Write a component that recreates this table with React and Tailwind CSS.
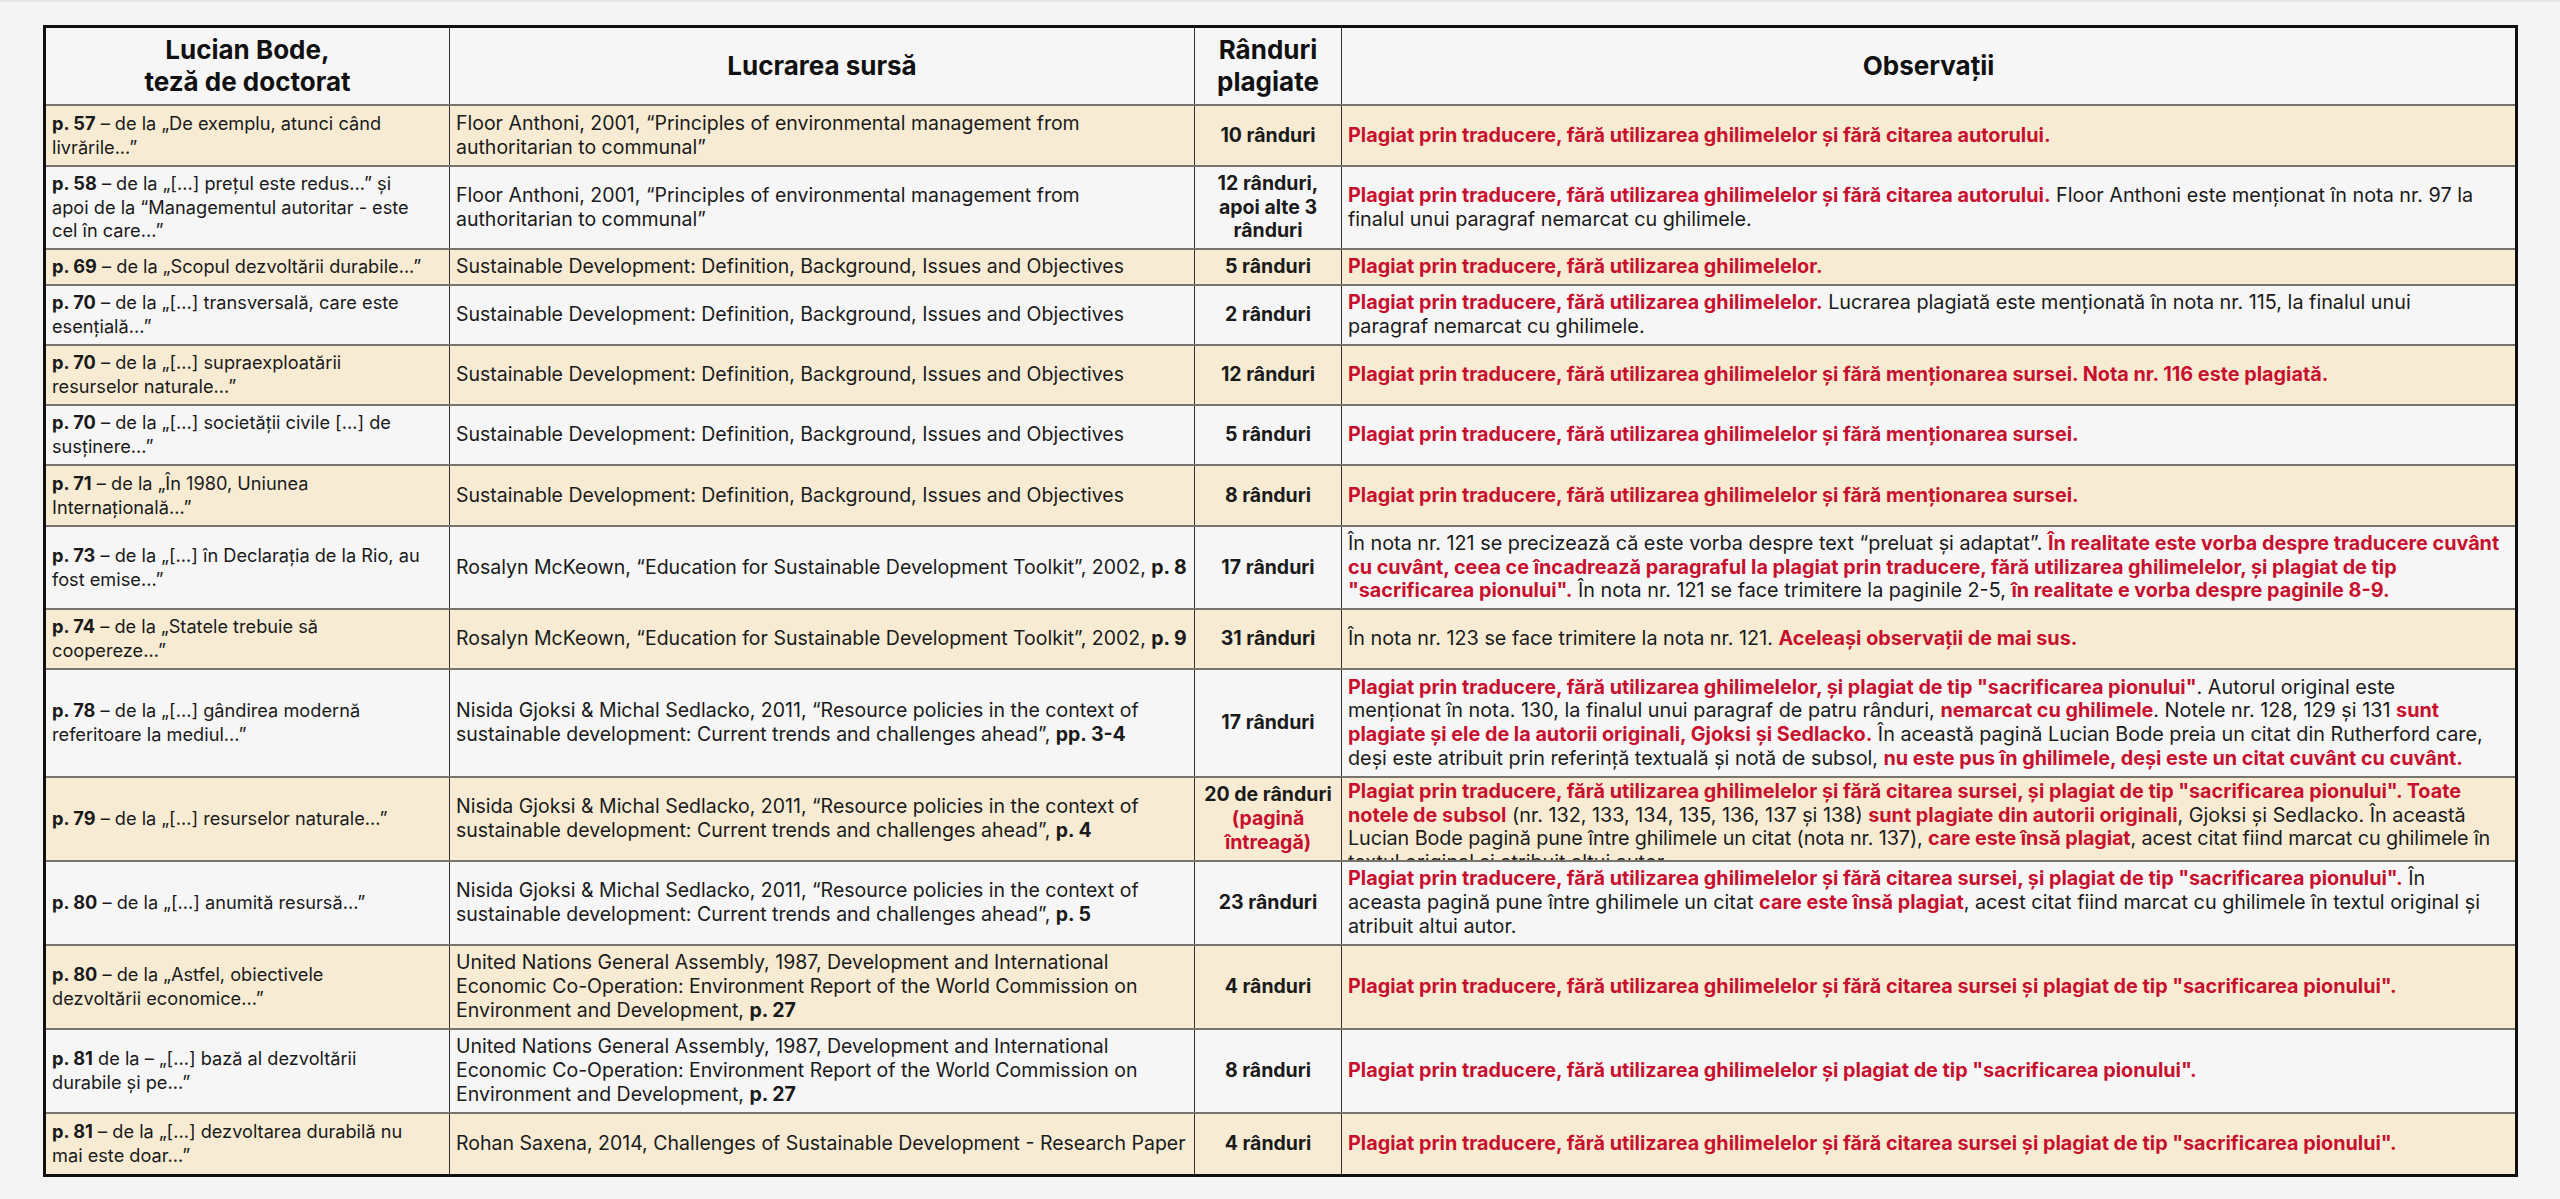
import React from 'react';

const R = ({ children }) => <span className="font-bold text-[#c8102e]">{children}</span>;
const B = ({ children }) => <span className="font-bold">{children}</span>;

const SD = 'Sustainable Development: Definition, Background, Issues and Objectives';
const FLOOR = 'Floor Anthoni, 2001, “Principles of environmental management from authoritarian to communal”';
const NISIDA =
  'Nisida Gjoksi & Michal Sedlacko, 2011, “Resource policies in the context of sustainable development: Current trends and challenges ahead”, ';
const UN =
  'United Nations General Assembly, 1987, Development and International Economic Co-Operation: Environment Report of the World Commission on Environment and Development, ';

// first column: page + quoted fragment, broken where the original breaks
const rows = [
  {
    h: 'h-[61px]',
    pg: 'p. 57',
    page: ['– de la „De exemplu, atunci când', 'livrările...”'],
    src: FLOOR,
    lines: '10 rânduri',
    obs: <R>Plagiat prin traducere, fără utilizarea ghilimelelor și fără citarea autorului.</R>,
  },
  {
    h: 'h-[83px]',
    pg: 'p. 58',
    page: ['– de la „[...] prețul este redus...” și', 'apoi de la “Managementul autoritar - este', 'cel în care...”'],
    src: FLOOR,
    lines: '12 rânduri, apoi alte 3 rânduri',
    obs: (
      <>
        <R>Plagiat prin traducere, fără utilizarea ghilimelelor și fără citarea autorului.</R> Floor Anthoni este menționat în nota nr. 97 la
        <br />
        finalul unui paragraf nemarcat cu ghilimele.
      </>
    ),
  },
  {
    h: 'h-[36px]',
    pg: 'p. 69',
    page: ['– de la „Scopul dezvoltării durabile...”'],
    src: SD,
    lines: '5 rânduri',
    obs: <R>Plagiat prin traducere, fără utilizarea ghilimelelor.</R>,
  },
  {
    h: 'h-[60px]',
    pg: 'p. 70',
    page: ['– de la „[...] transversală, care este', 'esențială...”'],
    src: SD,
    lines: '2 rânduri',
    obs: (
      <>
        <R>Plagiat prin traducere, fără utilizarea ghilimelelor.</R> Lucrarea plagiată este menționată în nota nr. 115, la finalul unui
        <br />
        paragraf nemarcat cu ghilimele.
      </>
    ),
  },
  {
    h: 'h-[60px]',
    pg: 'p. 70',
    page: ['– de la „[...] supraexploatării', 'resurselor naturale...”'],
    src: SD,
    lines: '12 rânduri',
    obs: <R>Plagiat prin traducere, fără utilizarea ghilimelelor și fără menționarea sursei. Nota nr. 116 este plagiată.</R>,
  },
  {
    h: 'h-[60px]',
    pg: 'p. 70',
    page: ['– de la „[...] societății civile [...] de', 'susținere...”'],
    src: SD,
    lines: '5 rânduri',
    obs: <R>Plagiat prin traducere, fără utilizarea ghilimelelor și fără menționarea sursei.</R>,
  },
  {
    h: 'h-[61px]',
    pg: 'p. 71',
    page: ['– de la „În 1980, Uniunea', 'Internațională...”'],
    src: SD,
    lines: '8 rânduri',
    obs: <R>Plagiat prin traducere, fără utilizarea ghilimelelor și fără menționarea sursei.</R>,
  },
  {
    h: 'h-[83px]',
    pg: 'p. 73',
    page: ['– de la „[...] în Declarația de la Rio, au', 'fost emise...”'],
    src: <>Rosalyn McKeown, “Education for Sustainable Development Toolkit”, 2002, <B>p. 8</B></>,
    lines: '17 rânduri',
    obs: (
      <>
        În nota nr. 121 se precizează că este vorba despre text “preluat și adaptat”.{' '}
        <R>
          În realitate este vorba despre traducere cuvânt
          <br />
          cu cuvânt, ceea ce încadrează paragraful la plagiat prin traducere, fără utilizarea ghilimelelor, și plagiat de tip
          <br />
          "sacrificarea pionului".
        </R>{' '}
        În nota nr. 121 se face trimitere la paginile 2-5, <R>în realitate e vorba despre paginile 8-9.</R>
      </>
    ),
  },
  {
    h: 'h-[60px]',
    pg: 'p. 74',
    page: ['– de la „Statele trebuie să', 'coopereze...”'],
    src: <>Rosalyn McKeown, “Education for Sustainable Development Toolkit”, 2002, <B>p. 9</B></>,
    lines: '31 rânduri',
    obs: (
      <>
        În nota nr. 123 se face trimitere la nota nr. 121. <R>Aceleași observații de mai sus.</R>
      </>
    ),
  },
  {
    h: 'h-[108px]',
    pg: 'p. 78',
    page: ['– de la „[...] gândirea modernă', 'referitoare la mediul...”'],
    src: <>{NISIDA}<B>pp. 3-4</B></>,
    lines: '17 rânduri',
    obs: (
      <>
        <R>Plagiat prin traducere, fără utilizarea ghilimelelor, și plagiat de tip "sacrificarea pionului"</R>. Autorul original este
        <br />
        menționat în nota. 130, la finalul unui paragraf de patru rânduri, <R>nemarcat cu ghilimele</R>. Notele nr. 128, 129 și 131{' '}
        <R>
          sunt
          <br />
          plagiate și ele de la autorii originali, Gjoksi și Sedlacko.
        </R>{' '}
        În această pagină Lucian Bode preia un citat din Rutherford care,
        <br />
        deși este atribuit prin referință textuală și notă de subsol, <R>nu este pus în ghilimele, deși este un citat cuvânt cu cuvânt.</R>
      </>
    ),
  },
  {
    h: 'h-[84px]',
    clip: true,
    pg: 'p. 79',
    page: ['– de la „[...] resurselor naturale...”'],
    src: <>{NISIDA}<B>p. 4</B></>,
    lines: (
      <>
        <span className="whitespace-nowrap">20 de rânduri</span> <R>(pagină întreagă)</R>
      </>
    ),
    obs: (
      <>
        <R>
          Plagiat prin traducere, fără utilizarea ghilimelelor și fără citarea sursei, și plagiat de tip "sacrificarea pionului". Toate
          <br />
          notele de subsol
        </R>{' '}
        (nr. 132, 133, 134, 135, 136, 137 și 138) <R>sunt plagiate din autorii originali</R>, Gjoksi și Sedlacko. În această
        <br />
        <span className="tracking-[-0.1px]">
          Lucian Bode pagină pune între ghilimele un citat (nota nr. 137), <R>care este însă plagiat</R>, acest citat fiind marcat cu ghilimele în
        </span>
        <br />
        textul original și atribuit altui autor.
      </>
    ),
  },
  {
    h: 'h-[84px]',
    pg: 'p. 80',
    page: ['– de la „[...] anumită resursă...”'],
    src: <>{NISIDA}<B>p. 5</B></>,
    lines: '23 rânduri',
    obs: (
      <>
        <R>Plagiat prin traducere, fără utilizarea ghilimelelor și fără citarea sursei, și plagiat de tip "sacrificarea pionului".</R> În
        <br />
        aceasta pagină pune între ghilimele un citat <R>care este însă plagiat</R>, acest citat fiind marcat cu ghilimele în textul original și
        <br />
        atribuit altui autor.
      </>
    ),
  },
  {
    h: 'h-[84px]',
    pg: 'p. 80',
    page: ['– de la „Astfel, obiectivele', 'dezvoltării economice...”'],
    src: <>{UN}<B>p. 27</B></>,
    lines: '4 rânduri',
    obs: <R>Plagiat prin traducere, fără utilizarea ghilimelelor și fără citarea sursei și plagiat de tip "sacrificarea pionului".</R>,
  },
  {
    h: 'h-[84px]',
    pg: 'p. 81',
    page: ['de la – „[...] bază al dezvoltării', 'durabile și pe...”'],
    src: <>{UN}<B>p. 27</B></>,
    lines: '8 rânduri',
    obs: <R>Plagiat prin traducere, fără utilizarea ghilimelelor și plagiat de tip "sacrificarea pionului".</R>,
  },
  {
    h: 'h-[60px]',
    pg: 'p. 81',
    page: ['– de la „[...] dezvoltarea durabilă nu', 'mai este doar...”'],
    src: 'Rohan Saxena, 2014, Challenges of Sustainable Development - Research Paper',
    lines: '4 rânduri',
    obs: <R>Plagiat prin traducere, fără utilizarea ghilimelelor și fără citarea sursei și plagiat de tip "sacrificarea pionului".</R>,
  },
];

export default function App() {
  return (
    <div
      className="min-h-screen bg-[#f4f4f4] border-t-2 border-[#e4e4e4] pt-[23px] pl-[43px] text-[#1a1a1a]"
      style={{ fontFamily: 'Inter, "Noto Sans", sans-serif' }}
    >
      <div className="w-[2475px] border-[3px] border-[#111] text-[19.5px] leading-[23.7px]">
        {/* Header */}
        <div className="grid grid-cols-[404px_745px_147px_1fr] h-[78px] border-b-2 border-[#76746c] bg-[#f6f6f6] text-[26px] leading-[32px] font-bold text-[#111] text-center">
          <div className="flex items-center justify-center border-r border-[#333] px-[6px]">
            Lucian Bode,
            <br />
            teză de doctorat
          </div>
          <div className="flex items-center justify-center border-r border-[#333] px-[6px]">Lucrarea sursă</div>
          <div className="flex items-center justify-center border-r border-[#333] px-[6px]">
            Rânduri
            <br />
            plagiate
          </div>
          <div className="flex items-center justify-center px-[6px]">Observații</div>
        </div>

        {rows.map((r, i) => (
          <div
            key={i}
            className={`grid grid-cols-[404px_745px_147px_1fr] overflow-hidden ${r.h} ${
              i % 2 === 0 ? 'bg-[#f7ecd3]' : 'bg-[#f6f6f6]'
            } ${i < rows.length - 1 ? 'border-b-2 border-[#76746c]' : ''}`}
          >
            <div className="flex items-center overflow-hidden border-r border-[#333] pl-[6px] pr-[2px] text-[18.2px]">
              <div>
                {r.page.map((ln, j) => (
                  <div key={j} className="whitespace-nowrap">
                    {j === 0 && <B>{r.pg}</B>}
                    {j === 0 ? ' ' : ''}
                    {ln}
                  </div>
                ))}
              </div>
            </div>
            <div className="flex items-center border-r border-[#333] px-[6px]">
              <div>{r.src}</div>
            </div>
            <div className="flex items-center justify-center border-r border-[#333] px-[4px] text-center font-bold">
              <div>{r.lines}</div>
            </div>
            <div
              className={`flex overflow-hidden px-[6px] text-[19.8px] ${r.clip ? 'items-start pt-[2px]' : 'items-center'}`}
            >
              <div>{r.obs}</div>
            </div>
          </div>
        ))}
      </div>
    </div>
  );
}
